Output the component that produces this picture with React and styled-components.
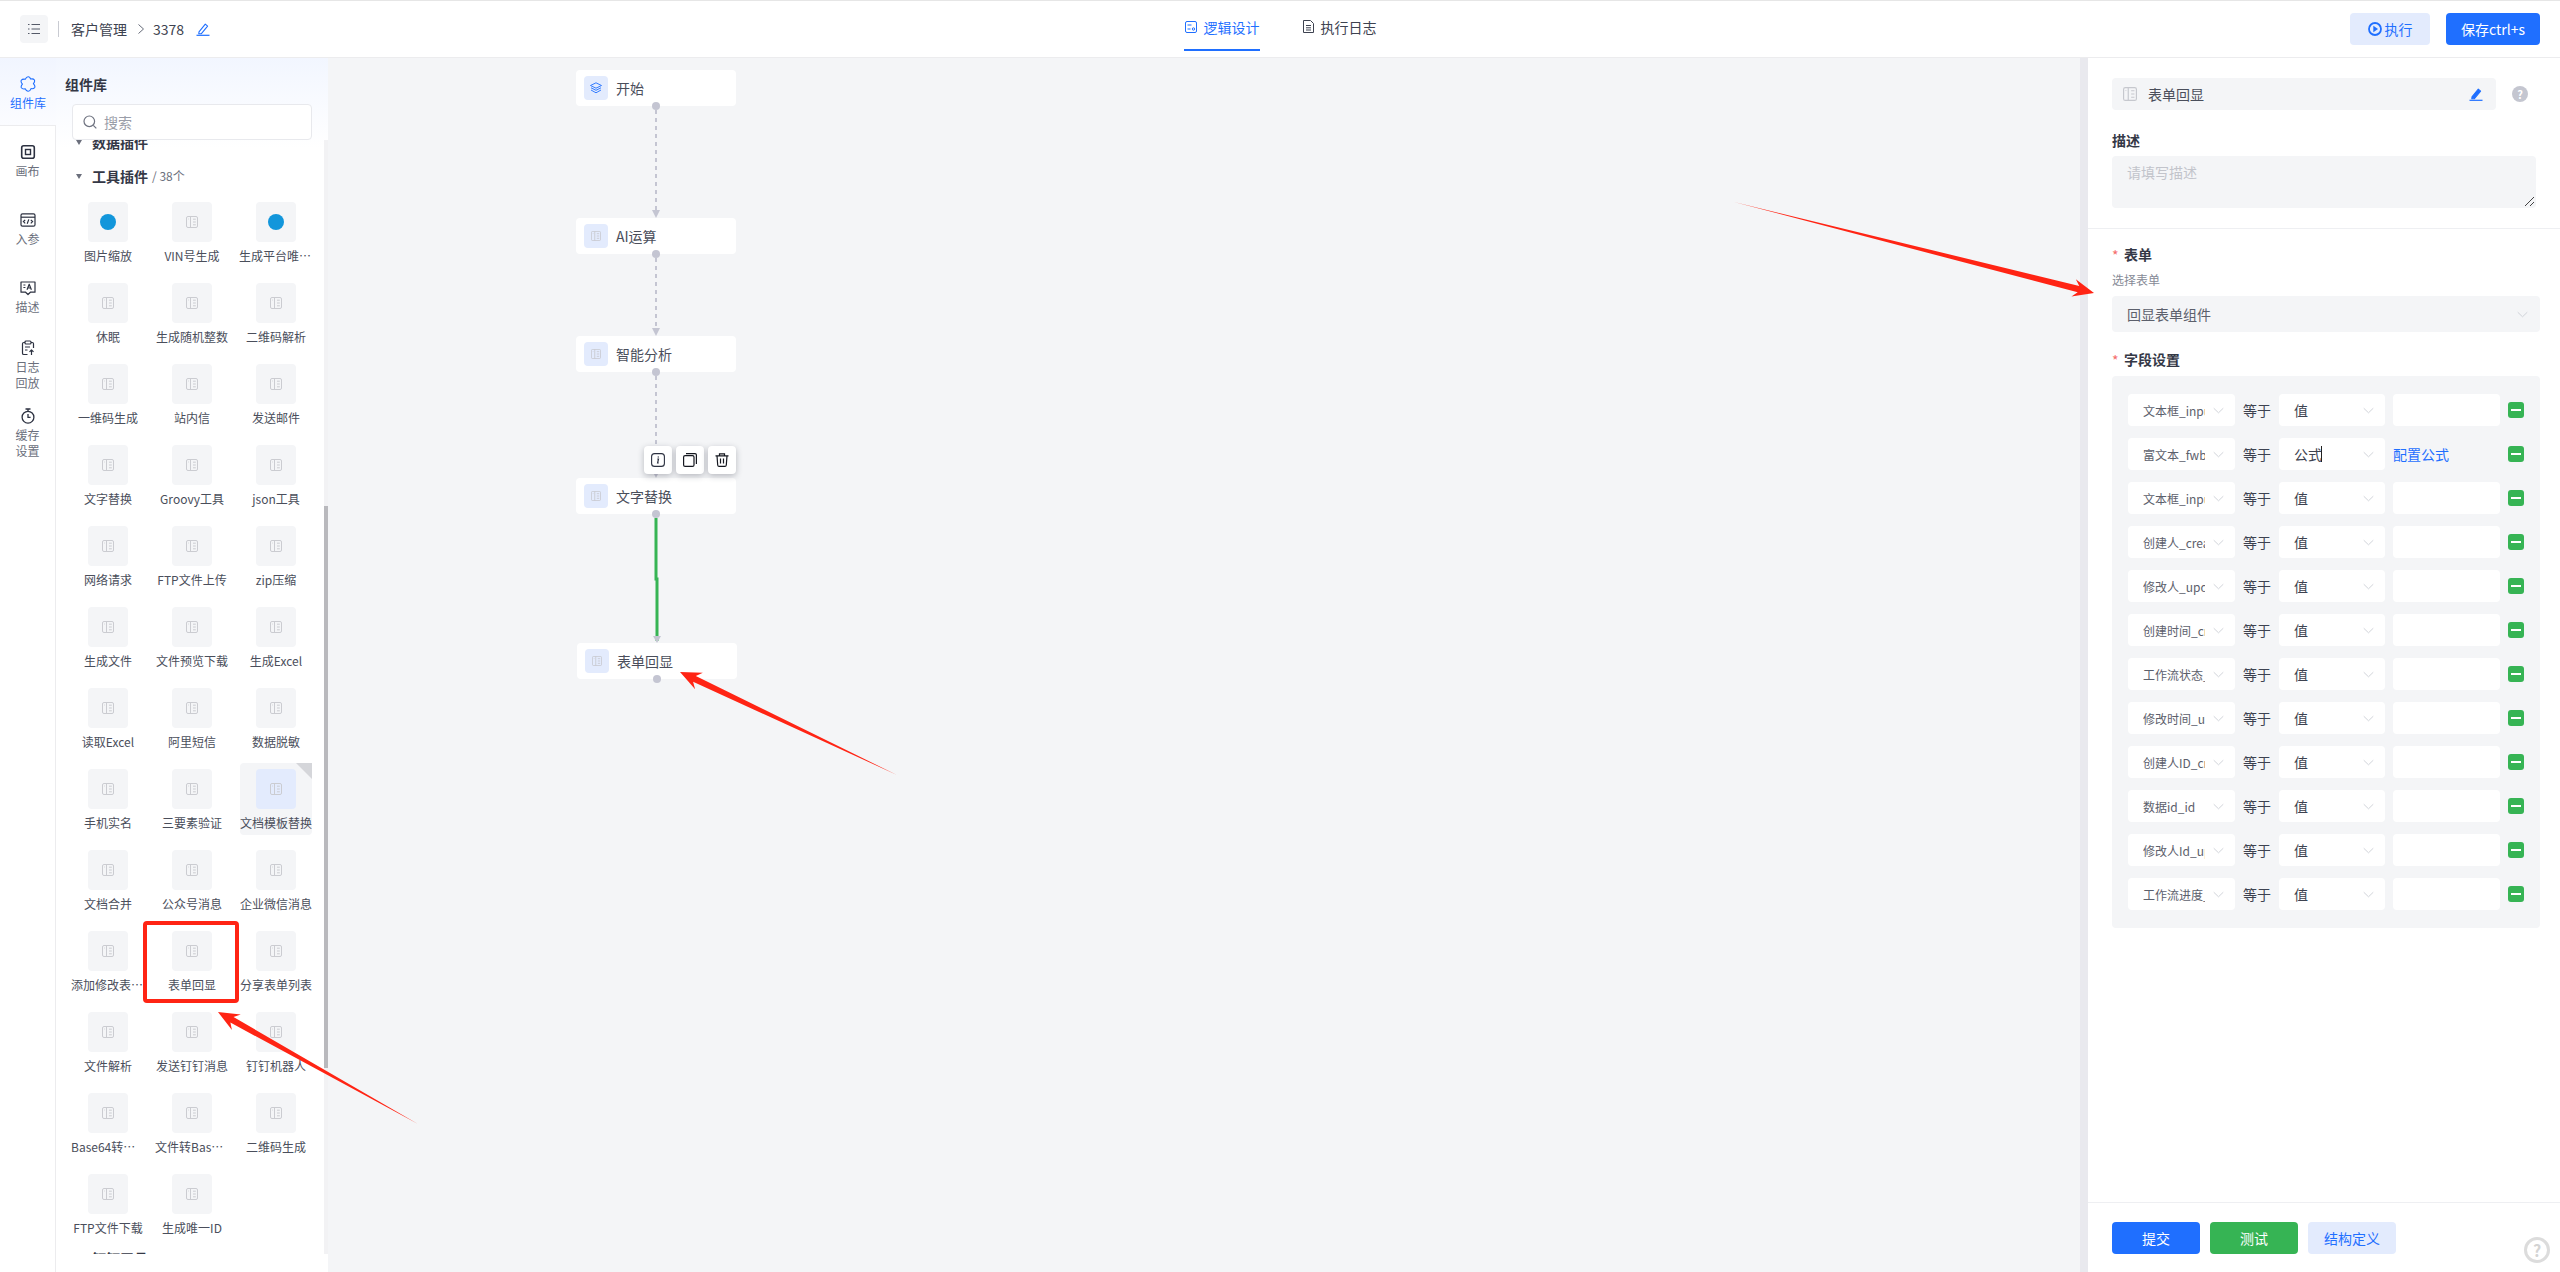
import React from "react"
import styled, { createGlobalStyle } from "styled-components"

const BLUE = "#1f6fff"
const LIGHT_BLUE = "#e3ebfd"
const GREEN = "#36b454"
const GREY_BG = "#f4f5f7"
const TEXT = "#3d4250"

const GlobalStyle = createGlobalStyle`
  html, body {
    margin: 0;
    padding: 0;
    background: #fff;
  }
  body {
    font-family: "Noto Sans CJK SC", "Noto Sans", sans-serif;
    font-size: 14px;
    color: ${TEXT};
  }
  * {
    box-sizing: border-box;
  }
`

const Page = styled.div`
  position: relative;
  width: 2560px;
  height: 1272px;
  overflow: hidden;
  display: flex;
  flex-direction: column;
`

const TopBar = styled.header`
  height: 58px;
  flex: none;
  display: grid;
  grid-template-columns: 1fr auto 1fr;
  align-items: center;
  padding: 0 20px;
  border-top: 1px solid #e6e6e6;
  border-bottom: 1px solid #ececee;
`

const Crumbs = styled.div`
  display: flex;
  align-items: center;
`

const MenuButton = styled.div`
  width: 28px;
  height: 28px;
  border-radius: 4px;
  background: ${GREY_BG};
  display: flex;
  align-items: center;
  justify-content: center;
  color: #555a68;
`

const CrumbDivider = styled.span`
  width: 1px;
  height: 16px;
  background: #c9cbd2;
  margin: 0 12px 0 10px;
`

const CrumbArrow = styled.span`
  display: flex;
  margin: 0 9px 0 11px;
  color: #666b78;
`

const CrumbEdit = styled.span`
  display: flex;
  margin-left: 12px;
  color: ${BLUE};
`

const Tabs = styled.nav`
  display: flex;
  gap: 42px;
  height: 100%;
`

const Tab = styled.div`
  display: flex;
  align-items: center;
  gap: 7px;
  height: 49px;
  margin-top: 1px;
  padding: 2px 0 0 1px;
  border-bottom: 2px solid ${p => (p.$active ? BLUE : "transparent")};
  color: ${p => (p.$active ? BLUE : TEXT)};
`

const TopActions = styled.div`
  display: flex;
  justify-content: flex-end;
  gap: 16px;
`

const TopButton = styled.div`
  height: 32px;
  width: ${p => p.$width}px;
  border-radius: 4px;
  display: flex;
  align-items: center;
  justify-content: center;
  gap: 3px;
  background: ${p => (p.$primary ? BLUE : LIGHT_BLUE)};
  color: ${p => (p.$primary ? "#fff" : BLUE)};
`

const Body = styled.div`
  flex: 1;
  display: flex;
  min-height: 0;
`

const Rail = styled.aside`
  width: 56px;
  flex: none;
  display: flex;
  flex-direction: column;
`

const RailItem = styled.div`
  height: 68px;
  flex: none;
  display: flex;
  flex-direction: column;
  align-items: center;
  padding-top: ${p => (p.$tall ? 10 : 18)}px;
  font-size: 12px;
  line-height: 16px;
  text-align: center;
  color: ${p => (p.$active ? BLUE : "#6b6f7c")};
  background: ${p => (p.$active ? "linear-gradient(180deg, #f1f5ff, #fbfcff)" : "#fff")};
  border-right: ${p => (p.$active ? "none" : "1px solid #ececee")};
  border-bottom: ${p => (p.$active ? "1px solid #ececee" : "none")};
  svg {
    color: ${p => (p.$active ? BLUE : "#2c3140")};
    margin-bottom: 3px;
  }
`

const RailFill = styled.div`
  flex: 1;
  border-right: 1px solid #ececee;
`

const Library = styled.section`
  width: 272px;
  flex: none;
  display: flex;
  flex-direction: column;
  padding-bottom: 18px;
  background: linear-gradient(180deg, #f2f6ff 0, #fff 90px);
`

const LibraryTitle = styled.h2`
  margin: 0;
  padding: 15px 0 9px 9px;
  font-size: 14px;
  line-height: 22px;
  font-weight: 700;
  color: #343846;
`

const Search = styled.div`
  width: 240px;
  height: 36px;
  margin-left: 16px;
  flex: none;
  display: flex;
  align-items: center;
  gap: 7px;
  padding-left: 10px;
  background: #fff;
  border: 1px solid #e8e9ed;
  border-radius: 4px;
  color: #9a9da8;
  position: relative;
  z-index: 1;
`

const Scroller = styled.div`
  flex: 1;
  min-height: 0;
  position: relative;
  overflow: hidden;
  padding-left: 16px;
`

const ScrollTrack = styled.div`
  position: absolute;
  top: 0;
  right: 0;
  bottom: 0;
  width: 4px;
  background: #f2f2f4;
`

const ScrollThumb = styled.div`
  margin-top: 366px;
  height: 562px;
  background: #b9b9bd;
`

const GroupHead = styled.div`
  display: flex;
  align-items: center;
  height: 22px;
  margin-top: ${p => p.$top}px;
  margin-bottom: ${p => p.$bottom}px;
  padding-left: 4px;
  font-weight: 700;
  line-height: 22px;
  color: #343846;
`

const GroupCaret = styled.span`
  width: 0;
  height: 0;
  margin-right: 10px;
  border-left: 3.5px solid transparent;
  border-right: 3.5px solid transparent;
  border-top: 5px solid #6b6f7c;
`

const GroupCount = styled.span`
  margin-left: 4px;
  font-size: 12px;
  font-weight: 400;
  color: #6b6f7c;
`

const PluginGrid = styled.div`
  display: grid;
  grid-template-columns: repeat(3, 72px);
  grid-auto-rows: 72px;
  column-gap: 12px;
  row-gap: 9px;
`

const Plugin = styled.div`
  position: relative;
  display: flex;
  flex-direction: column;
  align-items: center;
  padding-top: 6px;
  border-radius: 4px;
  background: ${p => (p.$hover ? GREY_BG : "transparent")};
`

const PluginIcon = styled.div`
  width: 40px;
  height: 40px;
  flex: none;
  display: flex;
  align-items: center;
  justify-content: center;
  border-radius: 4px;
  background: ${p => (p.$hover ? LIGHT_BLUE : GREY_BG)};
  color: #cbccd1;
`

const BlueDot = styled.span`
  width: 16px;
  height: 16px;
  border-radius: 50%;
  background: #1296db;
`

const PluginName = styled.div`
  width: 74px;
  flex: none;
  margin-top: 5px;
  font-size: 12px;
  line-height: 18px;
  text-align: center;
  white-space: nowrap;
  overflow: hidden;
  text-overflow: ellipsis;
  color: #4a4e5b;
`

const Fold = styled.span`
  position: absolute;
  top: 0;
  right: 0;
  width: 0;
  height: 0;
  border-left: 16px solid transparent;
  border-top: 16px solid #d5d6da;
`

const Canvas = styled.main`
  flex: 1;
  position: relative;
  background: ${GREY_BG};
`

const EdgeLayer = styled.svg`
  position: absolute;
  inset: 0;
  width: 100%;
  height: 100%;
`

const Node = styled.div`
  position: absolute;
  left: ${p => p.$x}px;
  top: ${p => p.$y}px;
  width: 160px;
  height: 36px;
  padding-left: 8px;
  display: flex;
  align-items: center;
  gap: 8px;
  background: #fff;
  border-radius: 4px;
  color: #4a4e5b;
  &::after {
    content: "";
    position: absolute;
    left: 76px;
    bottom: -4px;
    width: 8px;
    height: 8px;
    border-radius: 50%;
    background: #c4c5d2;
  }
`

const NodeIcon = styled.div`
  width: 24px;
  height: 24px;
  border-radius: 4px;
  background: ${LIGHT_BLUE};
  display: flex;
  align-items: center;
  justify-content: center;
  color: ${p => (p.$start ? BLUE : "#c6c8ce")};
`

const NodeTools = styled.div`
  position: absolute;
  left: 316px;
  top: 388px;
  display: flex;
  gap: 4px;
  z-index: 2;
`

const NodeTool = styled.div`
  width: 28px;
  height: 28px;
  border-radius: 4px;
  background: #fff;
  display: flex;
  align-items: center;
  justify-content: center;
  color: #14171f;
  box-shadow: 0 2px 6px rgba(40, 44, 60, 0.3);
`

const Config = styled.aside`
  width: 472px;
  flex: none;
  display: flex;
  flex-direction: column;
  background: #fff;
  box-shadow: -8px 0 0 #e9e9ee;
  position: relative;
`

const ConfigTop = styled.div`
  padding: 20px 24px 20px;
  border-bottom: 1px solid #eeeff2;
`

const TitleRow = styled.div`
  display: flex;
  align-items: center;
  gap: 16px;
  margin-bottom: 19px;
`

const TitleInput = styled.div`
  width: 384px;
  height: 32px;
  display: flex;
  align-items: center;
  gap: 11px;
  padding: 0 13px 0 11px;
  border-radius: 4px;
  background: ${GREY_BG};
  color: #4a4e5b;
  > svg {
    color: #c6c8ce;
  }
`

const TitleEdit = styled.span`
  display: flex;
  margin-left: auto;
  color: ${BLUE};
`

const HelpDot = styled.span`
  width: 16px;
  height: 16px;
  border-radius: 50%;
  background: #c4c6d0;
  color: #fff;
  font-size: 11px;
  font-weight: 700;
  line-height: 16px;
  text-align: center;
`

const FieldLabel = styled.div`
  display: flex;
  height: 22px;
  align-items: center;
  font-weight: 700;
  line-height: 22px;
  color: #343846;
  margin-bottom: ${p => p.$bottom || 0}px;
  margin-top: ${p => p.$top || 0}px;
`

const Star = styled.span`
  width: 12px;
  font-size: 14px;
  line-height: 14px;
  font-weight: 400;
  color: #f56c6c;
  align-self: flex-start;
  margin-top: 5px;
`

const DescBox = styled.div`
  position: relative;
  width: 424px;
  height: 52px;
  padding: 5px 15px;
  border-radius: 4px;
  background: ${GREY_BG};
  font-size: 14px;
  line-height: 22px;
  color: #c2c4cb;
`

const Resize = styled.svg`
  position: absolute;
  right: 1px;
  bottom: 1px;
  color: #444;
`

const ConfigMain = styled.div`
  flex: 1;
  padding: 14px 20px 0 24px;
`

const SubLabel = styled.div`
  margin-top: 6px;
  font-size: 12px;
  line-height: 18px;
  color: #868a96;
`

const FormSelect = styled.div`
  height: 36px;
  margin-top: 7px;
  padding: 0 12px 0 15px;
  display: flex;
  align-items: center;
  justify-content: space-between;
  border-radius: 4px;
  background: ${GREY_BG};
  color: #5c606c;
  svg {
    color: #cdd0d6;
  }
`

const FieldPanel = styled.div`
  height: 552px;
  padding: 18px 16px;
  display: flex;
  flex-direction: column;
  gap: 12px;
  border-radius: 4px;
  background: ${GREY_BG};
`

const FieldRow = styled.div`
  height: 32px;
  display: flex;
  align-items: center;
  gap: 8px;
`

const FieldSelect = styled.div`
  width: ${p => p.$width}px;
  height: 32px;
  flex: none;
  padding: 0 11px 0 15px;
  display: flex;
  align-items: center;
  border-radius: 4px;
  background: #fff;
  white-space: nowrap;
  svg {
    margin-left: auto;
    flex: none;
    color: #cdd0d6;
  }
`

const FieldName = styled.span`
  width: 62px;
  overflow: hidden;
  font-size: 12px;
  color: #5c606c;
`

const Caret = styled.span`
  width: 1px;
  height: 16px;
  background: #222;
  margin-left: -1px;
`

const Equals = styled.span`
  width: 28px;
  flex: none;
  color: ${TEXT};
`

const ValueInput = styled.div`
  width: 107px;
  height: 32px;
  flex: none;
  border-radius: 4px;
  background: #fff;
`

const FormulaLink = styled.div`
  width: 107px;
  flex: none;
  color: ${BLUE};
`

const MinusButton = styled.span`
  width: 16px;
  height: 16px;
  flex: none;
  display: flex;
  align-items: center;
  justify-content: center;
  border-radius: 3px;
  background: ${GREEN};
  &::before {
    content: "";
    width: 10px;
    height: 2px;
    background: #fff;
  }
`

const ConfigFooter = styled.footer`
  height: 70px;
  flex: none;
  padding: 19px 24px 0;
  display: flex;
  gap: 10px;
  border-top: 1px solid #eeeff2;
`

const FooterButton = styled.div`
  width: 88px;
  height: 32px;
  border-radius: 4px;
  display: flex;
  align-items: center;
  justify-content: center;
  background: ${p => ({ blue: BLUE, green: GREEN, light: LIGHT_BLUE })[p.$kind]};
  color: ${p => (p.$kind === "light" ? BLUE : "#fff")};
`

const FloatHelp = styled.div`
  position: absolute;
  left: 2524px;
  top: 1237px;
  width: 26px;
  height: 26px;
  border: 3px solid #dcdcdc;
  border-radius: 50%;
  color: #d4d4d4;
  font-size: 16px;
  font-weight: 700;
  line-height: 20px;
  text-align: center;
`

const Annotations = styled.svg`
  position: absolute;
  inset: 0;
  width: 2560px;
  height: 1272px;
  pointer-events: none;
  z-index: 5;
`

const PanelIcon = ({ size = 12 }) => (
  <svg width={size} height={size} viewBox="0 0 12 12" fill="none" stroke="currentColor" strokeWidth="1">
    <rect x="0.5" y="0.5" width="11" height="11" rx="1.5" />
    <path d="M4.5 .5v11M2.2 3h.6M7 3.2h2.8M7 6h2.8M7 8.8h2.8" />
  </svg>
)

const Chevron = ({ size = 11 }) => (
  <svg width={size} height={size} viewBox="0 0 12 12" fill="none" stroke="currentColor" strokeWidth="1">
    <path d="M.8 3.5 6 8.5l5.2-5" />
  </svg>
)

const EditLine = ({ size = 14, solid }) => (
  <svg width={size} height={size} viewBox="0 0 14 14" fill={solid ? "currentColor" : "none"} stroke="currentColor" strokeWidth="1.1">
    <path d="M3 9.8 9.3 2.2l2.3 1.9-6.2 7.5-2.6.2z" strokeLinejoin="round" />
    <path d="M.5 13.3h13" strokeWidth="1.2" />
  </svg>
)

// rail icons, drawn by hand since none of the packages have them
const PuzzleIcon = () => (
  <svg width="16" height="16" viewBox="0 0 16 16" fill="none" stroke="currentColor" strokeWidth="1.1" strokeLinejoin="round">
    <path d="M5.3 3.2Q6.5.6 8.4.8 10 1 10.6 3q2.800-.6 3.800 1 .8 1.600-1 3.600 2.200 2.400 1.200 4-1 1.400-3.600 1-1 2.800-3 2.600-1.800-.2-2.800-2.400-2.800.6-3.800-1-.8-1.600 1-3.600-2-2.400-1.100-3.900 1-1.500 4-1.100z" />
  </svg>
)

const CanvasIcon = () => (
  <svg width="16" height="16" viewBox="0 0 16 16" fill="none" stroke="currentColor">
    <rect x="1.700" y="1.700" width="12.600" height="12.600" rx="2" strokeWidth="1.600" />
    <rect x="5.500" y="5.500" width="5" height="5" strokeWidth="1.400" />
  </svg>
)

const CodeIcon = () => (
  <svg width="16" height="16" viewBox="0 0 16 16" fill="none" stroke="currentColor" strokeWidth="1.200">
    <rect x="1" y="1.800" width="14" height="12.400" rx="1.500" />
    <path d="M1 5.200h14" />
    <path d="M5.200 7.800 3.400 9.600l1.800 1.800M10.800 7.800l1.800 1.800-1.800 1.800M8.800 7.400l-1.600 4.400" />
  </svg>
)

const DescIcon = () => (
  <svg width="16" height="16" viewBox="0 0 16 16" fill="none" stroke="currentColor" strokeWidth="1.200" strokeLinejoin="round">
    <path d="M1 2h14v10.200h-4.600L8 14.500l-2.400-2.300H1z" />
    <path d="M7 9.800 9.200 4.200l2.200 5.600M7.800 8h2.800M3.400 5h2M3.400 7.500h2" />
  </svg>
)

const ClipboardIcon = () => (
  <svg width="16" height="16" viewBox="0 0 16 16" fill="none" stroke="currentColor" strokeWidth="1.200" strokeLinejoin="round">
    <path d="M5 2.500H3.800c-.8 0-1.300.5-1.300 1.300v9.400c0 .8.500 1.300 1.300 1.300h3.700M11 2.500h1.200c.8 0 1.300.5 1.300 1.300V8" />
    <rect x="5" y="1" width="6" height="3" rx="1" />
    <path d="M5 7h5M5 10h2.500M11.500 15V10M9.500 11.800l2-2 2 2" />
  </svg>
)

const TimerIcon = () => (
  <svg width="16" height="16" viewBox="0 0 16 16" fill="none" stroke="currentColor" strokeWidth="1.300">
    <circle cx="8" cy="9.200" r="5.900" />
    <path d="M5.500 1h5M8 1v2.300M8 6v3.400h2.600" />
  </svg>
)

const plugins = [
  ["图片缩放", "dot"], ["VIN号生成"], ["生成平台唯一ID", "dot"],
  ["休眠"], ["生成随机整数"], ["二维码解析"],
  ["一维码生成"], ["站内信"], ["发送邮件"],
  ["文字替换"], ["Groovy工具"], ["json工具"],
  ["网络请求"], ["FTP文件上传"], ["zip压缩"],
  ["生成文件"], ["文件预览下载"], ["生成Excel"],
  ["读取Excel"], ["阿里短信"], ["数据脱敏"],
  ["手机实名"], ["三要素验证"], ["文档模板替换", "hover"],
  ["文档合并"], ["公众号消息"], ["企业微信消息"],
  ["添加修改表单数据"], ["表单回显"], ["分享表单列表"],
  ["文件解析"], ["发送钉钉消息"], ["钉钉机器人"],
  ["Base64转文件"], ["文件转Base64"], ["二维码生成"],
  ["FTP文件下载"], ["生成唯一ID"],
]

const nodes = [
  { name: "开始", x: 248, y: 12, start: true },
  { name: "AI运算", x: 248, y: 160 },
  { name: "智能分析", x: 248, y: 278 },
  { name: "文字替换", x: 248, y: 420 },
  { name: "表单回显", x: 249, y: 585 },
]

const fields = [
  "文本框_input", "富文本_fwb", "文本框_input", "创建人_create",
  "修改人_update", "创建时间_create", "工作流状态_status", "修改时间_update",
  "创建人ID_create", "数据id_id", "修改人Id_update", "工作流进度_progress",
]

// tapered annotation arrow: a hair at the tail, a notched head at the tip
const arrowPoints = ([x1, y1], [x2, y2]) => {
  const len = Math.hypot(x2 - x1, y2 - y1)
  const ux = (x2 - x1) / len
  const uy = (y2 - y1) / len
  const at = (back, side) => `${x2 - ux * back - uy * side},${y2 - uy * back + ux * side}`
  return [
    `${x1},${y1}`,
    at(16, 3.2),
    at(21, 9),
    at(0, 0),
    at(21, -9),
    at(16, -3.2),
  ].join(" ")
}

const arrows = [
  [[418, 1124], [218, 1012]],
  [[897, 775], [680, 672]],
  [[1734, 202], [2094, 293]],
]

const Edge = ({ x, from, to }) => (
  <g>
    <line x1={x} y1={from} x2={x} y2={to - 6} stroke="#c4c5d2" strokeWidth="2" strokeDasharray="4 4" />
    <path d={`M${x - 4} ${to - 8}h8l-4 8z`} fill="#c4c5d2" />
  </g>
)

export default function App() {
  return (
    <Page>
      <GlobalStyle />
      <TopBar>
        <Crumbs>
          <MenuButton>
            <svg width="12" height="12" viewBox="0 0 12 12" fill="none" stroke="currentColor" strokeWidth="1">
              <path d="M3.500 1.500H12M3.500 6H12M3.500 10.500H12M0 1.500h1.500M0 6h1.500M0 10.500h1.500" />
            </svg>
          </MenuButton>
          <CrumbDivider />
          <span>客户管理</span>
          <CrumbArrow>
            <svg width="6" height="10" viewBox="0 0 6 10" fill="none" stroke="currentColor">
              <path d="m.5.500 5 4.500-5 4.500" />
            </svg>
          </CrumbArrow>
          <span>3378</span>
          <CrumbEdit><EditLine /></CrumbEdit>
        </Crumbs>
        <Tabs>
          <Tab $active>
            <svg width="12" height="12" viewBox="0 0 12 12" fill="none" stroke="currentColor" strokeWidth="1">
              <rect x=".5" y=".5" width="11" height="11" rx="1.500" />
              <path d="M2.500 4h4M2.500 8h3" />
              <circle cx="8.500" cy="8" r="1.200" />
            </svg>
            <span>逻辑设计</span>
          </Tab>
          <Tab>
            <svg width="11" height="13" viewBox="0 0 11 13" fill="none" stroke="currentColor" strokeWidth="1">
              <path d="M.5.500h7l3 3v9H.5z" strokeLinejoin="round" />
              <path d="M3 5.500h5M3 7.800h5M3 10h5" />
            </svg>
            <span>执行日志</span>
          </Tab>
        </Tabs>
        <TopActions>
          <TopButton $width={80}>
            <svg width="14" height="14" viewBox="0 0 14 14" fill="none">
              <circle cx="7" cy="7" r="6" stroke="currentColor" strokeWidth="1.800" />
              <path d="M5.300 3.800 10 7 5.300 10.200z" fill="currentColor" />
            </svg>
            <span>执行</span>
          </TopButton>
          <TopButton $primary $width={94}>保存ctrl+s</TopButton>
        </TopActions>
      </TopBar>

      <Body>
        <Rail>
          <RailItem $active><PuzzleIcon /><span>组件库</span></RailItem>
          <RailItem><CanvasIcon /><span>画布</span></RailItem>
          <RailItem><CodeIcon /><span>入参</span></RailItem>
          <RailItem><DescIcon /><span>描述</span></RailItem>
          <RailItem $tall><ClipboardIcon /><span>日志<br />回放</span></RailItem>
          <RailItem $tall><TimerIcon /><span>缓存<br />设置</span></RailItem>
          <RailFill />
        </Rail>

        <Library>
          <LibraryTitle>组件库</LibraryTitle>
          <Search>
            <svg width="14" height="14" viewBox="0 0 14 14" fill="none" stroke="#6f7380" strokeWidth="1.200">
              <circle cx="6.300" cy="6.300" r="5.300" />
              <path d="m10.300 10.300 3 3" />
            </svg>
            <span>搜索</span>
          </Search>
          <Scroller>
            <GroupHead $top={-9} $bottom={12}><GroupCaret />数据插件</GroupHead>
            <GroupHead $bottom={9}><GroupCaret />工具插件<GroupCount>/ 38个</GroupCount></GroupHead>
            <PluginGrid>
              {plugins.map(([name, kind]) => (
                <Plugin key={name} $hover={kind === "hover"}>
                  {kind === "hover" && <Fold />}
                  <PluginIcon $hover={kind === "hover"}>
                    {kind === "dot" ? <BlueDot /> : <PanelIcon />}
                  </PluginIcon>
                  <PluginName>{name}</PluginName>
                </Plugin>
              ))}
            </PluginGrid>
            <GroupHead $top={7}><GroupCaret />钉钉工具</GroupHead>
            <ScrollTrack><ScrollThumb /></ScrollTrack>
          </Scroller>
        </Library>

        <Canvas>
          <EdgeLayer>
            <Edge x={328} from={52} to={160} />
            <Edge x={328} from={200} to={278} />
            <Edge x={328} from={318} to={420} />
            <path d="M328 460v61h1v62" fill="none" stroke={GREEN} strokeWidth="3" />
            <path d={`M325 578h8l-4 7z`} fill="#c4c5d2" />
          </EdgeLayer>
          {nodes.map(n => (
            <Node key={n.name} $x={n.x} $y={n.y}>
              <NodeIcon $start={n.start}>
                {n.start ? (
                  <svg width="12" height="12" viewBox="0 0 12 12" fill="none" stroke="currentColor" strokeWidth=".9" strokeLinejoin="round">
                    <path d="M6 .8 11.500 3.500 6 6.200.5 3.500z" />
                    <path d="M1 5.800 6 8.300l5-2.500M1 8 6 10.800 11 8" />
                  </svg>
                ) : <PanelIcon size={10} />}
              </NodeIcon>
              <span>{n.name}</span>
            </Node>
          ))}
          <NodeTools>
            <NodeTool>
              <svg width="14" height="14" viewBox="0 0 14 14" fill="none" stroke="#2c3140">
                <rect x=".6" y=".6" width="12.800" height="12.800" rx="3" strokeWidth="1.100" />
                <path d="M6.300 6h1.200l-.9 4h1.100" strokeWidth="1.200" />
                <path d="M7.300 3.400v1" strokeWidth="1.400" />
              </svg>
            </NodeTool>
            <NodeTool>
              <svg width="14" height="14" viewBox="0 0 14 14" fill="none" stroke="currentColor" strokeWidth="1.200">
                <rect x=".6" y="2.600" width="10.400" height="10.800" rx="1.500" />
                <path d="M3 .6h9c.8 0 1.400.6 1.400 1.400v9" />
              </svg>
            </NodeTool>
            <NodeTool>
              <svg width="14" height="14" viewBox="0 0 14 14" fill="none" stroke="currentColor" strokeWidth="1.200">
                <path d="M.5 2.800h13M4.500 2.500V.8h5v1.700M2 2.800l.7 9.200c.1.900.6 1.400 1.400 1.400h5.800c.8 0 1.300-.5 1.400-1.400l.7-9.200M5.500 5.500v5M8.500 5.500v5" />
              </svg>
            </NodeTool>
          </NodeTools>
        </Canvas>

        <Config>
          <ConfigTop>
            <TitleRow>
              <TitleInput>
                <PanelIcon size={14} />
                <span>表单回显</span>
                <TitleEdit><EditLine solid /></TitleEdit>
              </TitleInput>
              <HelpDot>?</HelpDot>
            </TitleRow>
            <FieldLabel $bottom={5}>描述</FieldLabel>
            <DescBox>
              请填写描述
              <Resize width="11" height="11" viewBox="0 0 11 11" fill="none" stroke="currentColor" strokeWidth="1">
                <path d="M1 10 10 1M6 10l4-4" />
              </Resize>
            </DescBox>
          </ConfigTop>
          <ConfigMain>
            <FieldLabel><Star>*</Star>表单</FieldLabel>
            <SubLabel>选择表单</SubLabel>
            <FormSelect>
              <span>回显表单组件</span>
              <Chevron />
            </FormSelect>
            <FieldLabel $top={16} $bottom={6}><Star>*</Star>字段设置</FieldLabel>
            <FieldPanel>
              {fields.map((f, i) => (
                <FieldRow key={f + i}>
                  <FieldSelect $width={107}>
                    <FieldName>{f}</FieldName>
                    <Chevron />
                  </FieldSelect>
                  <Equals>等于</Equals>
                  <FieldSelect $width={106}>
                    <span>{i === 1 ? "公式" : "值"}</span>
                    {i === 1 && <Caret />}
                    <Chevron />
                  </FieldSelect>
                  {i === 1 ? <FormulaLink>配置公式</FormulaLink> : <ValueInput />}
                  <MinusButton />
                </FieldRow>
              ))}
            </FieldPanel>
          </ConfigMain>
          <ConfigFooter>
            <FooterButton $kind="blue">提交</FooterButton>
            <FooterButton $kind="green">测试</FooterButton>
            <FooterButton $kind="light">结构定义</FooterButton>
          </ConfigFooter>
        </Config>
      </Body>

      <FloatHelp>?</FloatHelp>
      <Annotations>
        {arrows.map(([tail, tip]) => (
          <polygon key={tip[0]} points={arrowPoints(tail, tip)} fill="#ff2414" />
        ))}
        <rect x="145" y="923" width="92" height="78" rx="2" fill="none" stroke="#ff2414" strokeWidth="4" />
      </Annotations>
    </Page>
  )
}
